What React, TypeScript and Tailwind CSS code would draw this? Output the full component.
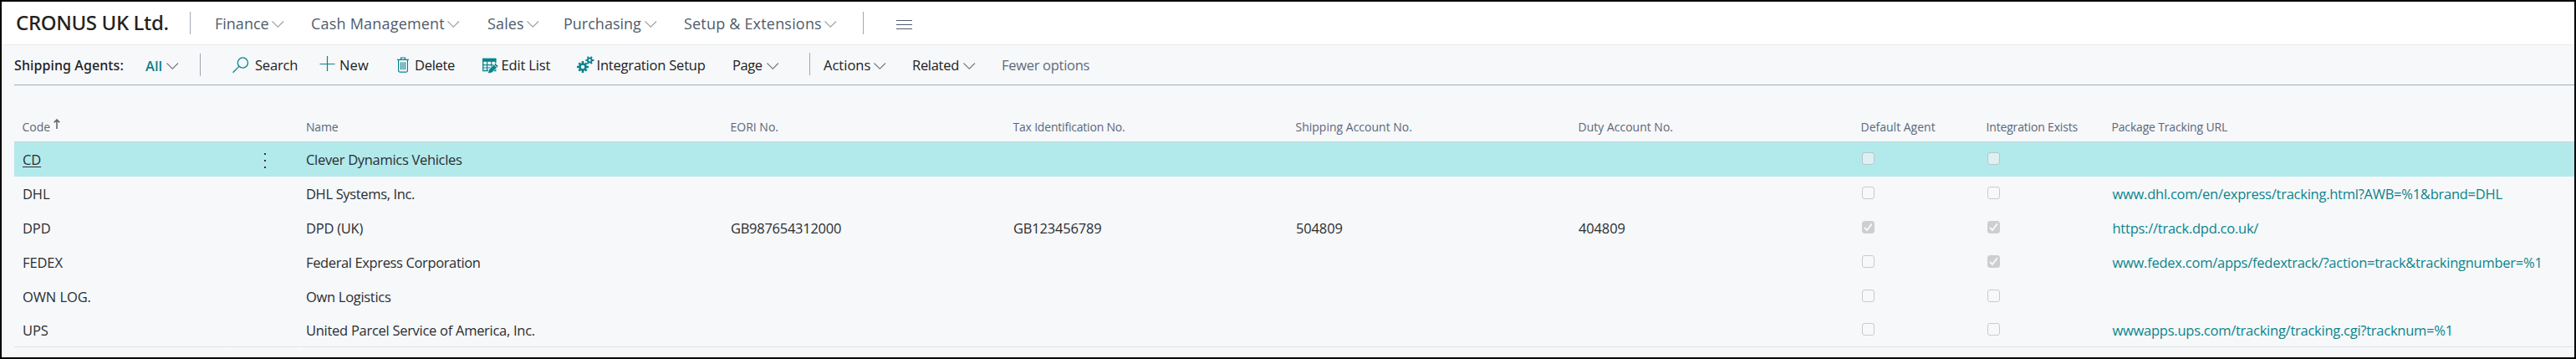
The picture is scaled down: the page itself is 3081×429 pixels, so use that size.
import type { ReactNode } from "react";

const TEAL = "#0a848c";

function Chevron({ className }: { className: string }) {
  return (
    <svg className={`h-2 w-[15px] shrink-0 ${className}`} viewBox="0 0 15 8" fill="none" stroke="currentColor" strokeWidth="1.1">
      <path d="M0.5 0.5 7.3 7.2 14 0.5" />
    </svg>
  );
}

function Divider({ className }: { className: string }) {
  return <div className={`h-[27px] w-px shrink-0 bg-[#a0a7b4] ${className}`} />;
}

function SearchIcon() {
  return (
    <svg className="h-5 w-5" viewBox="0 0 20 20" fill="none" stroke={TEAL} strokeWidth="1.3">
      <circle cx="12.4" cy="7" r="6.1" />
      <path d="M7.9 11.4 0.5 18.8" />
    </svg>
  );
}

function PlusIcon() {
  return (
    <svg className="h-5 w-5" viewBox="0 0 20 20" fill="none" stroke={TEAL} strokeWidth="1.2">
      <path d="M9.5 0v18M0.5 9.5h18" />
    </svg>
  );
}

function TrashIcon() {
  return (
    <svg className="h-5 w-[15px]" viewBox="0 0 15 20" fill="none" stroke={TEAL} strokeWidth="1.2">
      <path d="M0 3.4h14M4.5 3.2V1h5v2.2M1.6 3.6v13q0 1.5 1.5 1.5h7.8q1.5 0 1.5-1.5v-13M4.6 6.3v9M7 6.3v9M9.4 6.3v9" />
    </svg>
  );
}

function EditListIcon() {
  return (
    <svg className="h-5 w-5" viewBox="0 0 20 20" fill="none">
      <path d="M0.7 1.5h15v14h-15z" fill="#f6f8fa" stroke={TEAL} strokeWidth="1.3" />
      <path d="M0 0.8h16.4v4H0z" fill={TEAL} />
      <path d="M0.5 8.6h15M0.5 12h15M5.6 4v11.5M10.8 4v11.5" stroke={TEAL} strokeWidth="1.2" />
      <path d="m6.3 19 1.4-4.9 7.6-7.7 3.9 3.6-7.9 7.9z" fill={TEAL} stroke="#f6f8fa" strokeWidth="0.8" />
      <path d="m13.6 7.9 3.8 3.8" stroke="#f6f8fa" strokeWidth="0.9" />
    </svg>
  );
}

function GearsIcon() {
  return (
    <svg className="h-5 w-[21px]" viewBox="0 0 21 20" fill="none" stroke={TEAL}>
      <circle cx="7" cy="13" r="3.5" strokeWidth="2.6" />
      <path d="M7 6v3M7 17v3M0 13h3M11 13h3M2.3 8.3l2.1 2.1M9.6 15.6l2.1 2.1M2.3 17.7l2.1-2.1M9.6 10.4l2.1-2.1" strokeWidth="2.5" />
      <circle cx="15.3" cy="5" r="2.4" strokeWidth="1.9" />
      <path d="M12.8 0.7l1.2 2.1M17.8 0.7l-1.2 2.1M12.8 9.3l1.2-2.1M17.8 9.3l-1.2-2.1M10.4 5h2.2M18 5h2.4" strokeWidth="2.1" />
    </svg>
  );
}

const navItems = [
  { label: "Finance", item: "w-[115px]", text: "w-[68px]" },
  { label: "Cash Management", item: "w-[211px]", text: "w-[163px] tracking-[0.2px]" },
  { label: "Sales", item: "w-[91px]", text: "w-[47px] tracking-[0.15px]" },
  { label: "Purchasing", item: "w-[144px]", text: "w-[97px]" },
  { label: "Setup & Extensions", item: "w-[214px]", text: "w-[168px] tracking-[0.19px]" },
];

function Header() {
  return (
    <header className="flex h-[52px] items-start border-b border-[#e6e9ec] bg-white pl-[17px]">
      <h1 className="w-[208px] font-['Noto_Sans','Open_Sans',sans-serif] text-[24px] leading-[49px] font-medium tracking-[-0.35px] text-[#212121]">
        CRONUS UK Ltd.
      </h1>
      <Divider className="mt-3 mr-[29px]" />
      <nav className="flex text-[18px] leading-[52px] text-[#505c6d]">
        {navItems.map((n) => (
          <a key={n.label} className={`flex shrink-0 ${n.item}`}>
            <span className={n.text}>{n.label}</span>
            <Chevron className="mt-[23px] text-[#9aa1ab]" />
          </a>
        ))}
      </nav>
      <Divider className="mt-3 mr-[39px]" />
      <div className="mt-[22px] flex w-[19px] flex-col gap-1">
        <div className="h-px bg-[#505c6d]" />
        <div className="h-px bg-[#505c6d]" />
        <div className="h-px bg-[#505c6d]" />
      </div>
    </header>
  );
}

function Action({ icon, iconBox, className, label }: { icon: ReactNode; iconBox: string; className: string; label: string }) {
  return (
    <button className={`flex shrink-0 items-start text-left ${className}`}>
      <span className={`shrink-0 ${iconBox}`}>{icon}</span>
      <span>{label}</span>
    </button>
  );
}

function Toolbar() {
  return (
    <div className="ml-[15px] flex h-12 items-start border-b border-[#a3abba] leading-[47px] whitespace-nowrap text-[#212121]">
      <span className="w-[157px] font-['Noto_Sans','Open_Sans',sans-serif] text-[16px] leading-[49px] font-medium tracking-[0.1px]">
        Shipping Agents:
      </span>
      <span className="w-[25px] leading-[49px] font-semibold text-[#0a848c]">All</span>
      <Chevron className="mt-[21px] mr-[25px] text-[#777]" />
      <Divider className="mt-[10px] mr-[38px]" />
      <Action icon={<SearchIcon />} iconBox="w-[27px] pt-[14px]" className="w-[104px] tracking-[-0.2px]" label="Search" />
      <Action icon={<PlusIcon />} iconBox="w-[24px] pt-[13px]" className="w-[93px] tracking-[0.1px]" label="New" />
      <Action icon={<TrashIcon />} iconBox="w-[21px] pt-[14px]" className="w-[102px] tracking-[-0.3px]" label="Delete" />
      <Action icon={<EditListIcon />} iconBox="w-[22.5px] pt-[14.5px]" className="w-[113px] tracking-[-0.15px]" label="Edit List" />
      <Action icon={<GearsIcon />} iconBox="w-[23.5px] pt-[13px]" className="w-[186px] tracking-[-0.2px]" label="Integration Setup" />
      <span className="w-[41px] tracking-[-0.4px]">Page</span>
      <Chevron className="mt-[21px] mr-[36px] text-[#777]" />
      <Divider className="mt-[9px] mr-4" />
      <span className="w-[60px]">Actions</span>
      <Chevron className="mt-[21px] mr-[31px] text-[#777]" />
      <span className="w-[61px] tracking-[-0.3px]">Related</span>
      <Chevron className="mt-[21px] mr-[31px] text-[#777]" />
      <span className="tracking-[-0.29px] text-[#606b7c]">Fewer options</span>
    </div>
  );
}

function Checkbox({ checked, selected, last }: { checked: boolean; selected: boolean; last: boolean }) {
  const tone = checked
    ? "border-[#cdcfcf] bg-[#cdcfcf]"
    : selected
      ? "border-[#b3c6c8] bg-[#dff0f3]"
      : "border-[#c9cccc] bg-[#f7f9f9]";
  return (
    <div className={`ml-[2px] flex h-[15px] w-[15px] items-center justify-center rounded-[3px] border ${tone} ${last ? "mt-[11px]" : "mt-3"}`}>
      {checked && (
        <svg className="h-[13px] w-[13px] shrink-0" viewBox="0 0 13 13" fill="none" stroke="#f6f8fa" strokeWidth="2">
          <path d="m2 7 3 3 5.8-7.6" />
        </svg>
      )}
    </div>
  );
}

const GRID = "grid grid-cols-[258px_84px_507px_338px_338px_338px_338px_150px_150px_561px]";

const columns: [string, string][] = [
  ["EORI No.", ""],
  ["Tax Identification No.", "tracking-[-0.2px]"],
  ["Shipping Account No.", ""],
  ["Duty Account No.", ""],
  ["Default Agent", ""],
  ["Integration Exists", "tracking-[-0.17px]"],
  ["Package Tracking URL", "tracking-[-0.17px]"],
];

type Agent = {
  code: string;
  name: string;
  nameClass: string;
  eori?: string;
  tax?: string;
  ship?: string;
  duty?: string;
  isDefault?: boolean;
  integration?: boolean;
  url?: string;
};

const agents: Agent[] = [
  { code: "CD", name: "Clever Dynamics Vehicles", nameClass: "tracking-[-0.31px]" },
  { code: "DHL", name: "DHL Systems, Inc.", nameClass: "tracking-[-0.35px]", url: "www.dhl.com/en/express/tracking.html?AWB=%1&brand=DHL" },
  {
    code: "DPD",
    name: "DPD (UK)",
    nameClass: "tracking-[-0.25px]",
    eori: "GB987654312000",
    tax: "GB123456789",
    ship: "504809",
    duty: "404809",
    isDefault: true,
    integration: true,
    url: "https://track.dpd.co.uk/",
  },
  {
    code: "FEDEX",
    name: "Federal Express Corporation",
    nameClass: "tracking-[-0.37px]",
    integration: true,
    url: "www.fedex.com/apps/fedextrack/?action=track&trackingnumber=%1",
  },
  { code: "OWN LOG.", name: "Own Logistics", nameClass: "tracking-[-0.3px]" },
  { code: "UPS", name: "United Parcel Service of America, Inc.", nameClass: "tracking-[-0.28px]", url: "wwwapps.ups.com/tracking/tracking.cgi?tracknum=%1" },
];

function AgentRow({ agent, selected, last }: { agent: Agent; selected: boolean; last: boolean }) {
  const cell = `border-b pl-[7px] ${last ? "border-[#e0e3e6]" : "border-[#d2d5da]"}`;
  return (
    <div
      className={`${GRID} overflow-hidden whitespace-nowrap text-[#2b2d30] ${selected ? "bg-[#b2eaec]" : ""} ${last ? "h-10 leading-[39px]" : "h-[41px] leading-[41px]"}`}
    >
      <div className={`${cell} mr-px`}>
        <span className={`ml-[3px] tracking-[-0.1px] ${selected ? "underline decoration-1 underline-offset-2" : ""}`}>{agent.code}</span>
      </div>
      <div className={`${cell} mr-px`}>
        {selected && (
          <div className="mt-[13px] ml-[34px] flex flex-col gap-[6px]">
            <div className="h-[2px] w-[2px] bg-[#333]" />
            <div className="h-[2px] w-[2px] bg-[#333]" />
            <div className="h-[2px] w-[2px] bg-[#333]" />
          </div>
        )}
      </div>
      <div className={`${cell} ${agent.nameClass}`}>{agent.name}</div>
      <div className={`${cell} tracking-[-0.27px]`}>
        <span className="ml-px">{agent.eori}</span>
      </div>
      <div className={`${cell} tracking-[-0.2px]`}>
        <span className="ml-px">{agent.tax}</span>
      </div>
      <div className={`${cell} tracking-[-0.15px]`}>
        <span className="ml-px">{agent.ship}</span>
      </div>
      <div className={`${cell} tracking-[-0.15px]`}>
        <span className="ml-px">{agent.duty}</span>
      </div>
      <div className={cell}>
        <Checkbox checked={!!agent.isDefault} selected={selected} last={last} />
      </div>
      <div className={cell}>
        <Checkbox checked={!!agent.integration} selected={selected} last={last} />
      </div>
      <div className={`${cell} tracking-[-0.25px] text-[#0a848c]`}>
        <span className="ml-[1.5px]">{agent.url}</span>
      </div>
    </div>
  );
}

export default function App() {
  return (
    <div className="h-[429px] w-[3081px] overflow-hidden border-2 border-black bg-[#f6f8fa] font-['Open_Sans','Noto_Sans',sans-serif] text-[16.5px]">
      <Header />
      <Toolbar />
      <main className="ml-[15px]">
        <div className={`${GRID} h-[68px] items-end border-b border-[#d2d5da] pb-[8px] text-[14px] leading-[19px] whitespace-nowrap text-[#5c6779]`}>
          <div className="flex pl-[9.5px]">
            Code
            <svg className="ml-[3.5px] h-[12px] w-[8px]" viewBox="0 0 8 12" fill="none" stroke="#666" strokeWidth="1.6">
              <path d="M4 12V1.2M0.7 4.4 4 1.1l3.3 3.3" />
            </svg>
          </div>
          <div />
          <div className="pl-[7px] tracking-[-0.2px]">Name</div>
          {columns.map(([label, tracking]) => (
            <div key={label} className={`pl-[7.5px] ${tracking}`}>
              {label}
            </div>
          ))}
        </div>
        {agents.map((agent, i) => (
          <AgentRow key={agent.code} agent={agent} selected={i === 0} last={i === agents.length - 1} />
        ))}
      </main>
    </div>
  );
}
